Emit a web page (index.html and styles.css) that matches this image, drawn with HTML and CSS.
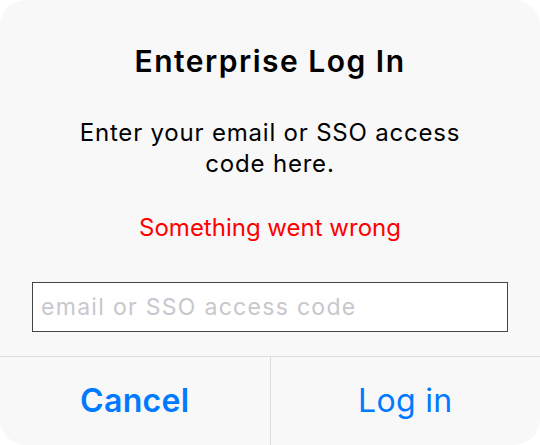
FILE: index.html
```html
<!DOCTYPE html>
<html>
<head>
<meta charset="utf-8">
<link rel="stylesheet" href="styles.css">
</head>
<body>
<div class="dialog">
  <div class="content">
    <h1 class="title">Enterprise Log In</h1>
    <p class="message">Enter your email or SSO access code here.</p>
    <p class="error">Something went wrong</p>
    <div class="field"><input class="input" type="text" placeholder="email or SSO access code"></div>
  </div>
  <div class="actions">
    <button class="btn btn-cancel">Cancel</button>
    <button class="btn btn-login">Log in</button>
  </div>
</div>
</body>
</html>
```
FILE: styles.css
```css
html, body {
  margin: 0;
  padding: 0;
  background: #ffffff;
}
body {
  width: 540px;
  height: 445px;
  overflow: hidden;
  font-family: Inter, "Liberation Sans", sans-serif;
}
.dialog {
  width: 540px;
  height: 445px;
  background: #f8f8f8;
  border-radius: 26px;
  display: flex;
  flex-direction: column;
  overflow: hidden;
}
.content {
  flex: 1;
  display: flex;
  flex-direction: column;
  align-items: center;
  padding: 0 32px;
}
.title {
  margin: 42px 0 0;
  font-size: 30px;
  font-weight: 600;
  line-height: 38px;
  color: #000;
  letter-spacing: 1.5px;
}
.message {
  margin: 37px 0 0;
  width: 420px;
  text-align: center;
  font-size: 24px;
  line-height: 31px;
  letter-spacing: 0.8px;
  color: #000;
}
.error {
  margin: 33px 0 0;
  font-size: 24px;
  line-height: 31px;
  letter-spacing: 0;
  color: #ff0000;
}
.field {
  margin-top: 39px;
  width: 100%;
}
.input {
  box-sizing: border-box;
  width: 476px;
  height: 50px;
  border: 1px solid #444;
  background: #fff;
  padding: 0 8px;
  font-family: inherit;
  font-size: 23px;
  letter-spacing: 1.3px;
  color: #000;
  outline: none;
  border-radius: 0;
}
.input::placeholder {
  color: #c7c7cd;
}
.actions {
  height: 88px;
  display: flex;
  border-top: 1px solid #dcdcdf;
}
.btn {
  flex: 1;
  background: transparent;
  border: 0;
  margin: 0;
  padding: 0 0 2px;
  font-family: inherit;
  font-size: 32px;
  letter-spacing: 0.3px;
  color: #007aff;
}
.btn-cancel {
  font-weight: 600;
  border-right: 1px solid #dcdcdf;
}
.btn-login {
  font-weight: 400;
}
```
